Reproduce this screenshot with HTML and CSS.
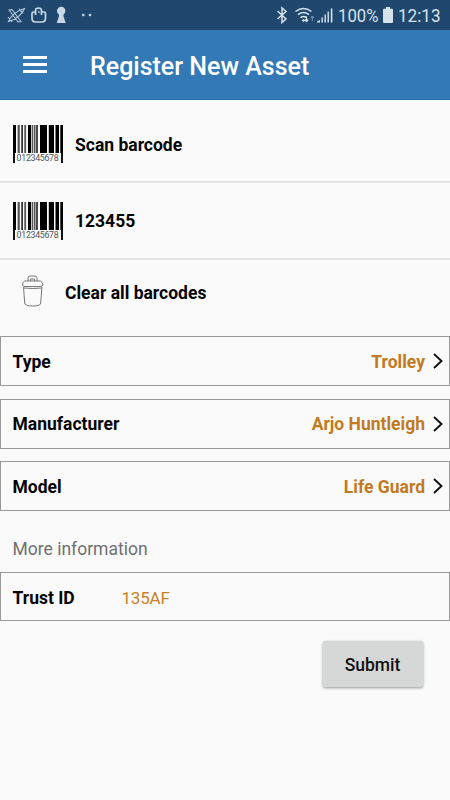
FILE: index.html
```html
<!DOCTYPE html>
<html lang="en">
<head>
<meta charset="utf-8">
<title>Register New Asset</title>
<link rel="stylesheet" href="styles.css">
</head>
<body>
<svg class="defs" width="0" height="0" aria-hidden="true">
  <symbol id="bars" viewBox="0 0 50 28">
    <path fill="#000" d="M0 0h3v28H0zM8.400 0h1.400v28H8.400zM15 0h3v28h-3zM23.300 0h1.400v28h-1.400zM27 0h7v28h-7zM35.800 0h5.200v28h-5.200zM42.500 0h3.500v28h-3.500zM47.300 0h2.700v28h-2.700z"/>
    <path fill="#555" d="M4.600 0h2.200v28H4.600zM11.300 0h1.800v28h-1.800zM18.700 0h1.600v28h-1.600zM21 0h1.500v28H21z"/>
  </symbol>
  <symbol id="chevron" viewBox="0 0 10 16">
    <path d="M1 1l7.500 7L1 15" fill="none" stroke="#111" stroke-width="1.900"/>
  </symbol>
</svg>
<div class="status">
  <svg class="status-left" width="100" height="30" viewBox="0 0 100 30">
    <g fill="none" stroke="#b5cadc" stroke-width="1.100">
      <path d="M9 10l3-.5 9 12-3 .5zM8.500 21.500C10 17 17 10 24.500 8.500 23 13 16 20 8.500 21.500zM8 17l4 5M19 9l4 4"/>
      <path stroke="#c5d6e5" stroke-width="1.700" d="M35.500 12h-2q-1.500 0-1.500 1.500V18q0 4 3.500 4h6.500q3.500 0 3.500-4v-4.500q0-1.500-1.500-1.500h-2M35.500 15v-4.500q0-2.500 3-2.500t3 2.500V15M38 12h1.500"/>
    </g>
    <g fill="#c9d8e5"><circle cx="61.200" cy="11" r="4.200"/><path d="M59 13h4.400v3l2.300 7h-9l2.300-7z"/><circle cx="83.300" cy="15" r="1.300"/><circle cx="90" cy="15" r="1.300"/></g>
  </svg>
  <div class="status-right">
    <svg width="60" height="30" viewBox="0 0 60 30">
      <g fill="none" stroke="#d5e1eb" stroke-width="1.500">
        <path d="M2.500 11l8.500 8-4 3.500V8l4 3.500L2.500 19"/>
        <path d="M20.500 11.500q8-6 16 0M23 14.700q5.500-4.300 11 0M25.500 17.700q3-2.500 6 0"/>
        <path stroke-width="1.200" d="M31.500 16.500v5m-1.800-2l1.800 2 1.800-2"/>
        <path stroke="#7899b5" stroke-width="1" d="M37.300 21v-5m-1.600 2l1.600-2 1.600 2"/>
      </g>
      <path fill="#d5e1eb" d="M28.500 19l1.800 1.600-1.800 1.400-1.800-1.400zM42 22.500V21.500l3-1.500v2.500zM46.500 17.500h1.400v5h-1.400zM49.500 14.500h1.400v8h-1.400zM52.500 11.500h1.400v11h-1.400zM55.800 8.500h1.600v14h-1.600z"/>
    </svg>
    <span class="percent">100%</span>
    <svg class="battery" width="10" height="16" viewBox="0 0 10 16"><path fill="#d5e1eb" d="M3 0h4v1.800h2q1 0 1 1V15q0 1-1 1H1q-1 0-1-1V2.800q0-1 1-1h2z"/></svg>
    <span class="clock">12:13</span>
  </div>
</div>
<header class="bar">
  <div class="menu"><i></i><i></i><i></i></div>
  <h1>Register New Asset</h1>
</header>
<main>
  <div class="row scan">
    <div class="barcode"><svg class="barlines" width="50" height="28"><use href="#bars"/></svg><span>012345678</span></div>
    <b>Scan barcode</b>
  </div>
  <div class="row code">
    <div class="barcode"><svg class="barlines" width="50" height="28"><use href="#bars"/></svg><span>012345678</span></div>
    <b>123455</b>
  </div>
  <div class="row clear">
    <svg width="24" height="32" viewBox="0 0 24 32" fill="none" stroke="#777" stroke-width="1"><path d="M7 6V3q0-2 2-2h5q2 0 2 2v3M9.500 6V4h4v2M3.500 6h16q2 1 2.500 4-1 1.500-3 1.500H4Q2 11.500 1.500 10 1.500 7 3.500 6zM2.500 12l1.200 16q0 3 8 3t8-3l1.200-16M2.500 13q9.500 1 18.500 0"/></svg>
    <b>Clear all barcodes</b>
  </div>
  <div class="fields">
    <div class="field"><b>Type</b><b class="value">Trolley</b><svg width="10" height="16"><use href="#chevron"/></svg></div>
    <div class="field"><b>Manufacturer</b><b class="value">Arjo Huntleigh</b><svg width="10" height="16"><use href="#chevron"/></svg></div>
    <div class="field"><b>Model</b><b class="value">Life Guard</b><svg width="10" height="16"><use href="#chevron"/></svg></div>
  </div>
  <div class="more">More information</div>
  <div class="field trust"><b>Trust ID</b><span class="id">135AF</span></div>
  <button class="submit">Submit</button>
</main>
</body>
</html>
```
FILE: styles.css
```css
* { box-sizing: border-box; }
body { margin: 0; height: 800px; background: #fafafa; font-family: Roboto, "Liberation Sans", sans-serif; font-size: 17.5px; color: #050505; overflow: hidden; }
svg { display: block; flex: none; }
.defs { position: absolute; }
b { font-weight: 700; white-space: nowrap; }
.status { height: 30px; background: #20486e; display: flex; justify-content: space-between; }
.status-right { display: flex; align-items: center; color: #d5e1eb; font-size: 19px; width: 175px; }
.percent { width: 45px; margin-left: 3px; transform: scaleX(.88); transform-origin: left; }
.clock { margin-left: 5px; transform: scaleX(.9); transform-origin: left; }
.bar { height: 70px; background: #3379b5; border-bottom: 1px solid #286da7; display: flex; align-items: center; padding: 2px 0 0 23px; color: #fff; }
.menu { width: 24px; display: flex; flex-direction: column; gap: 4px; margin-top: -2px; }
.menu i { height: 3px; background: #fff; }
.bar h1 { margin: 2px 0 0 43px; font-size: 25px; font-weight: 500; white-space: nowrap; }
.row { display: flex; align-items: center; padding-left: 12.500px; }
.scan { height: 82.500px; border-bottom: 2px solid #e2e2e2; padding-top: 8px; }
.scan b { margin-top: 1px; }
.code { height: 77px; border-bottom: 2px solid #e2e2e2; padding-top: 1px; }
.row .barcode { margin-right: 12.500px; }
.clear { height: 66px; padding-left: 21px; }
.clear svg { margin-right: 20px; margin-top: -3px; }
.barcode { width: 50px; height: 38px; border: solid #111; border-width: 0 2px; }
.barlines { margin-left: -2px; }
.barcode span { display: flex; justify-content: center; font-size: 8.800px; line-height: 11px; letter-spacing: -.3px; color: #555; }
.fields { display: flex; flex-direction: column; gap: 12.500px; margin-top: 10.500px; }
.field { height: 50px; border: 1px solid #999; display: flex; align-items: center; padding: 1px 6px 0 11.500px; }
.field svg { margin-top: -1px; }
.value { margin-left: auto; margin-right: 8px; color: #c27a1e; }
.more { height: 61px; line-height: 77px; padding-left: 12.500px; color: #707070; }
.trust { height: 49px; padding-top: 2px; }
.trust b { width: 109px; }
.id { color: #c88227; font-size: 17px; letter-spacing: -.2px; }
.submit { display: block; width: 100px; height: 46px; margin: 20px 27.500px 0 auto; padding: 2px 0 0; border: 0; border-radius: 2px; background: #d6d8d7; box-shadow: 0 1px 3px rgba(0, 0, 0, .4); font: 500 17.5px Roboto, sans-serif; color: #111; }
```
